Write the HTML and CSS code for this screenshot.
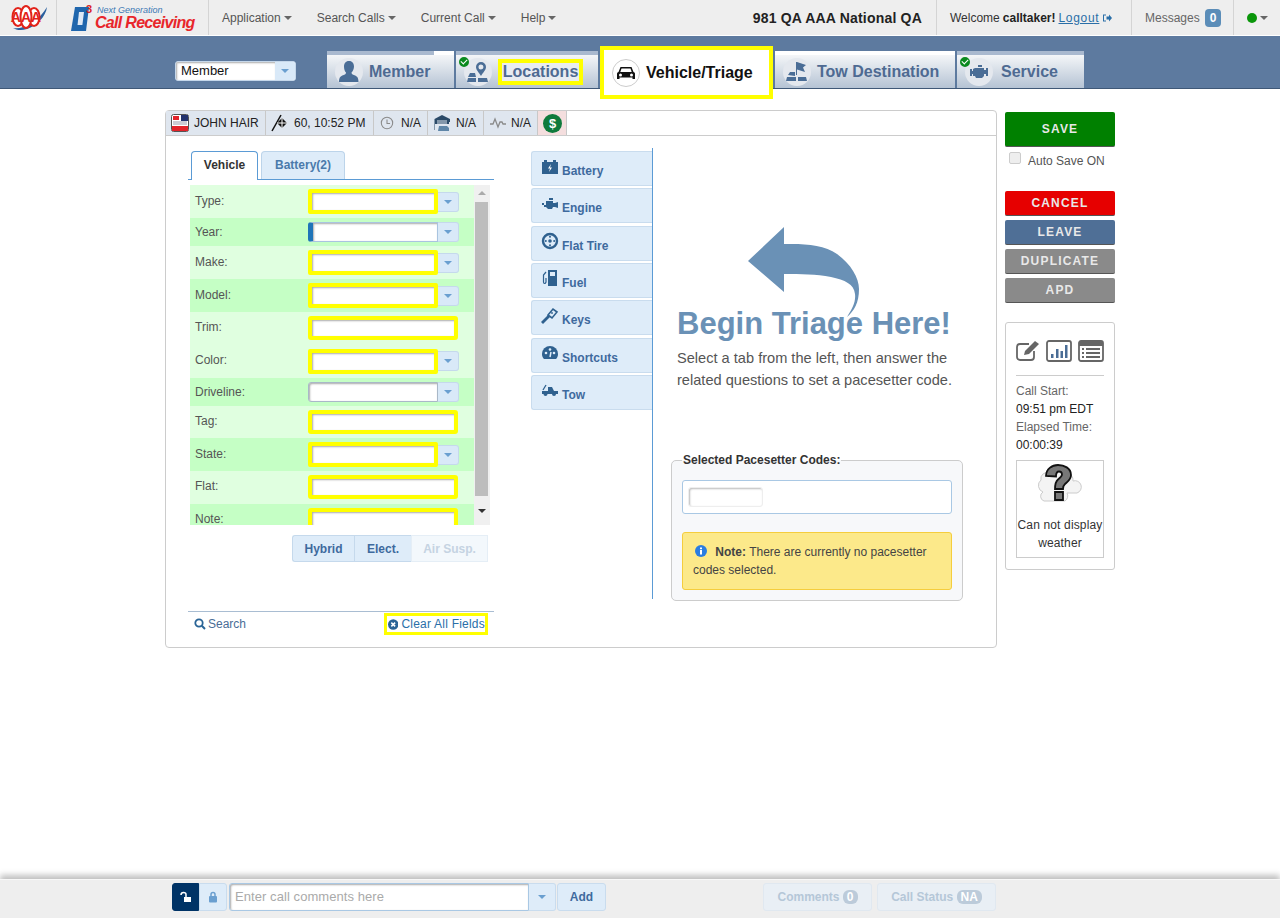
FILE: index.html
```html
<!DOCTYPE html>
<html lang="en">
<head>
    <meta charset="UTF-8">
    <title>Call Receiving</title>
    <link rel="stylesheet" href="styles.css">
</head>
<body>
    <!-- top menu -->
    <header class="topbar">
        <div class="cell logo-aaa">
            <svg width="42" height="30" viewBox="0 0 42 30">
                <path d="M6 25C16 27 32 18 40 4c-1 9-10 19-20 22-6 2-11 1-14-1z" fill="#2a5f9e"/>
                <ellipse cx="11" cy="14" rx="5.500" ry="9" fill="#fff" stroke="#e2231a" stroke-width="2"/>
                <ellipse cx="27" cy="14" rx="5.500" ry="9" fill="#fff" stroke="#e2231a" stroke-width="2"/>
                <ellipse cx="19" cy="14" rx="5.500" ry="11" fill="#fff" stroke="#e2231a" stroke-width="2"/>
                <text x="19" y="19" class="aaa-text" text-anchor="middle">AAA</text>
            </svg>
        </div>
        <div class="cell logo-call">
            <svg width="24" height="28" viewBox="0 0 24 28">
                <path d="M5 3h14l-3 24H1z" fill="#1f66ad"/>
                <path d="M9 8h5l-1.600 13H7.500z" fill="#dfe9f5"/>
                <text x="16" y="9" class="d3-text">3</text>
            </svg>
            <div class="logo-words">
                <span class="logo-next">Next Generation</span>
                <span class="logo-name">Call Receiving</span>
            </div>
        </div>
        <nav class="menu">
            <a href="#">Application<i class="caret"></i></a>
            <a href="#">Search Calls<i class="caret"></i></a>
            <a href="#">Current Call<i class="caret"></i></a>
            <a href="#">Help<i class="caret"></i></a>
        </nav>
        <div class="club">981 QA AAA National QA</div>
        <div class="cell welcome">
            <span>Welcome</span>
            <b>calltaker!</b>
            <a href="#">Logout</a>
            <svg width="10" height="10" viewBox="0 0 10 10"><path d="M1 1.500h3v1H2v5h2v1H1zM4.500 3.500H7V1.500L10 5 7 8.500v-2H4.500z" fill="#2a6fa8"/></svg>
        </div>
        <div class="cell messages">Messages <span class="badge">0</span></div>
        <div class="cell status-dot"><i class="dot"></i><i class="caret"></i></div>
    </header>

    <!-- blue tab band -->
    <div class="band">
        <div class="member-select">
            <span class="member-value">Member</span>
            <span class="drop"><i class="caret-blue"></i></span>
        </div>
        <div class="main-tabs">
            <a class="tab tab-member" href="#">
                <i class="tab-bar-end"></i>
                <span class="tab-icon">
                    <svg width="24" height="24" viewBox="0 0 24 24"><path d="M12 1c3.500 0 5 2.500 5 5.500 0 2.500-1.200 4.800-2.500 6 0 1.500 1 2 3 2.800 2 .8 4 1.700 4 6.700H2c0-5 2-5.900 4-6.700 2-.8 3-1.300 3-2.800C7.700 11.300 7 9 7 6.500 7 3.500 8.500 1 12 1z" fill="#4a6d96"/></svg>
                </span>
                Member
            </a>
            <a class="tab tab-locations" href="#">
                <i class="check"></i>
                <span class="tab-icon">
                    <svg width="24" height="24" viewBox="0 0 24 24"><path d="M15 2a5 5 0 0 1 5 5c0 3-3 5.500-5 9-2-3.500-5-6-5-9a5 5 0 0 1 5-5zm0 2.500a2.500 2.500 0 1 0 0 5 2.500 2.500 0 0 0 0-5z" fill="#4a6d96"/><path d="M2 17l2-4h5l1 4zM1 22l1-4h8v4zM12 22v-4h9l1 4z" fill="#4a6d96"/></svg>
                </span>
                <span class="mark-yellow">Locations</span>
            </a>
            <a class="tab tab-active" href="#">
                <span class="tab-icon">
                    <svg width="22" height="22" viewBox="0 0 22 22"><path d="M5.500 5h11l2 5c1 .4 1.500 1 1.500 2v5h-2.500v-1.500h-13V17H2v-5c0-1 .5-1.600 1.500-2zm1 1.500L5.300 10h11.400l-1.200-3.500zM5.500 11.500a1.500 1.500 0 1 0 0 3 1.500 1.500 0 0 0 0-3zm11 0a1.500 1.500 0 1 0 0 3 1.500 1.500 0 0 0 0-3z" fill="#111"/></svg>
                </span>
                Vehicle/Triage
            </a>
            <a class="tab tab-tow" href="#">
                <span class="tab-icon">
                    <svg width="24" height="24" viewBox="0 0 24 24"><path d="M11 2h1l9 3-3 2.500L20 12l-8-2.500V15h-1zM3 15l2-3h5v4zM1 21l1-4h9v4zM13 21v-4h8l1 4z" fill="#4a6d96"/></svg>
                </span>
                Tow Destination
            </a>
            <a class="tab tab-service" href="#">
                <i class="check"></i>
                <span class="tab-icon">
                    <svg width="24" height="24" viewBox="0 0 24 24"><path d="M8 8h9v2h2V8h2v8h-2v-2h-2v2l-2 2H9l-1-2H6v-2H5v2H3V9h2v2h1V9zM11 5h4v2h-4z" fill="#4a6d96"/></svg>
                </span>
                Service
            </a>
        </div>
    </div>

    <main class="content">
        <section class="panel">
            <div class="status-bar">
                <div class="stat stat-name">
                    <svg width="18" height="18" viewBox="0 0 18 18"><rect x=".5" y=".5" width="17" height="17" rx="2" fill="#fff" stroke="#555"/><rect x="1" y="12" width="16" height="5" fill="#e2232a"/><rect x="10" y="1" width="7" height="6" fill="#23336e"/><rect x="2" y="2" width="6" height="4" fill="#e2232a"/><path d="M2 8h14M2 10h14" stroke="#99a"/></svg>
                    JOHN HAIR
                </div>
                <div class="stat stat-eta">
                    <svg width="18" height="18" viewBox="0 0 18 18"><path d="M1 17L10 1" stroke="#111" stroke-width="1.500"/><path d="M11 4l5 5-5 5-5-5z" fill="#111"/><path d="M11 4v10M6 9h10" stroke="#fff"/></svg>
                    60, 10:52 PM
                </div>
                <div class="stat stat-clock">
                    <svg width="14" height="14" viewBox="0 0 16 16"><circle cx="8" cy="8" r="6.500" fill="none" stroke="#8a8a8a" stroke-width="1.200"/><path d="M8 4v4.500h3.500" fill="none" stroke="#8a8a8a" stroke-width="1.200"/></svg>
                    N/A
                </div>
                <div class="stat stat-garage">
                    <svg width="18" height="18" viewBox="0 0 18 18"><path d="M9 1l8 4v3h-1v2H2v6h-.5V5z" fill="#2b4a68"/><path d="M4 7h10M4 9h10" stroke="#dfe6ef"/><path d="M6 12h8l2 2v3H5z" fill="#5f86a8"/></svg>
                    N/A
                </div>
                <div class="stat stat-wave">
                    <svg width="16" height="14" viewBox="0 0 16 14"><path d="M0 8h3l2-5 3 8 2-5h2l1 2h3" fill="none" stroke="#8a8a8a" stroke-width="1.300"/></svg>
                    N/A
                </div>
                <div class="stat stat-money"><span class="dollar">$</span></div>
            </div>

            <div class="panel-body">
                <!-- vehicle form -->
                <div class="form-col">
                    <div class="sub-tabs">
                        <a class="sub-tab sub-active" href="#">Vehicle</a>
                        <a class="sub-tab" href="#">Battery(2)</a>
                    </div>
                    <div class="form-box">
                        <div class="rows">
                            <div class="row row-tall"><label>Type:</label><span class="field field-req"></span><span class="drop-btn"><i class="caret-blue"></i></span></div>
                            <div class="row row-alt row-short"><label>Year:</label><span class="field field-focus"></span><span class="drop-btn"><i class="caret-blue"></i></span></div>
                            <div class="row row-tall"><label>Make:</label><span class="field field-req"></span><span class="drop-btn"><i class="caret-blue"></i></span></div>
                            <div class="row row-alt row-tall"><label>Model:</label><span class="field field-req"></span><span class="drop-btn"><i class="caret-blue"></i></span></div>
                            <div class="row row-mid"><label>Trim:</label><span class="field field-req field-wide"></span></div>
                            <div class="row row-tall"><label>Color:</label><span class="field field-req"></span><span class="drop-btn"><i class="caret-blue"></i></span></div>
                            <div class="row row-alt row-short"><label>Driveline:</label><span class="field field-plain"></span><span class="drop-btn"><i class="caret-blue"></i></span></div>
                            <div class="row row-mid"><label>Tag:</label><span class="field field-req field-wide"></span></div>
                            <div class="row row-alt row-tall"><label>State:</label><span class="field field-req"></span><span class="drop-btn"><i class="caret-blue"></i></span></div>
                            <div class="row row-mid"><label>Flat:</label><span class="field field-req field-wide"></span></div>
                            <div class="row row-alt row-mid"><label>Note:</label><span class="field field-req field-wide"></span></div>
                        </div>
                        <div class="scrollbar">
                            <i class="arrow-up"></i>
                            <div class="thumb"></div>
                            <i class="arrow-down"></i>
                        </div>
                    </div>
                    <div class="options">
                        <a class="opt opt-hybrid" href="#">Hybrid</a>
                        <a class="opt opt-elect" href="#">Elect.</a>
                        <a class="opt opt-off" href="#">Air Susp.</a>
                    </div>
                    <div class="form-foot">
                        <a class="foot-link" href="#">
                            <svg width="12" height="12" viewBox="0 0 12 12"><circle cx="5" cy="5" r="3.700" fill="none" stroke="#2a6496" stroke-width="1.800"/><path d="M7.800 7.800L11 11" stroke="#2a6496" stroke-width="2"/></svg>
                            Search
                        </a>
                        <a class="foot-link clear-link" href="#">
                            <svg width="11" height="11" viewBox="0 0 11 11"><circle cx="5.500" cy="5.500" r="5.500" fill="#2a6496"/><path d="M3.500 3.500l4 4M7.500 3.500l-4 4" stroke="#fff" stroke-width="1.600"/></svg>
                            Clear All Fields
                        </a>
                    </div>
                </div>

                <!-- triage categories -->
                <div class="side-tabs">
                    <a class="side-tab" href="#">
                        <svg width="18" height="16" viewBox="0 0 18 16"><path d="M1 3h16v12H1zM3 1h3v2H3zM12 1h3v2h-3z" fill="#2f618f"/><path d="M10 5L7 9.500h2L8 13l3-4.500H9z" fill="#fff"/></svg>
                        Battery
                    </a>
                    <a class="side-tab" href="#">
                        <svg width="18" height="16" viewBox="0 0 18 16"><path d="M5 5h7v2h2l3-1v6l-3-1h-2l-1 2H7l-2-2H3V9H1V7h2v2h2zM8 2h4v2H8z" fill="#2f618f"/></svg>
                        Engine
                    </a>
                    <a class="side-tab" href="#">
                        <svg width="18" height="18" viewBox="0 0 18 18"><circle cx="9" cy="9" r="7" fill="none" stroke="#2f618f" stroke-width="2.400"/><circle cx="9" cy="9" r="1.800" fill="#2f618f"/><circle cx="9" cy="4.800" r="1" fill="#2f618f"/><circle cx="9" cy="13.200" r="1" fill="#2f618f"/><circle cx="4.800" cy="9" r="1" fill="#2f618f"/><circle cx="13.200" cy="9" r="1" fill="#2f618f"/></svg>
                        Flat Tire
                    </a>
                    <a class="side-tab" href="#">
                        <svg width="18" height="18" viewBox="0 0 18 18"><path d="M7 1h9v16H7zM9 3v4h5V3z" fill="#2f618f" fill-rule="evenodd"/><path d="M5 3L2.500 6v7c0 2 2 2 2.500 0V9" fill="none" stroke="#2f618f" stroke-width="1.200"/></svg>
                        Fuel
                    </a>
                    <a class="side-tab" href="#">
                        <svg width="18" height="18" viewBox="0 0 18 18"><path d="M1 16l7-7" stroke="#2f618f" stroke-width="2.800"/><path d="M7 8l5-6 4 3-5 6z" fill="#dfedfa" stroke="#2f618f" stroke-width="1.600"/><circle cx="11" cy="6" r=".9" fill="#2f618f"/></svg>
                        Keys
                    </a>
                    <a class="side-tab" href="#">
                        <svg width="18" height="16" viewBox="0 0 18 16"><path d="M9 1a8 8 0 0 1 8 8c0 2-.7 3.800-2 5H3C1.700 12.800 1 11 1 9a8 8 0 0 1 8-8z" fill="#2f618f"/><circle cx="5" cy="8" r="1.300" fill="#dfedfa"/><circle cx="9" cy="4.500" r="1.300" fill="#dfedfa"/><circle cx="13" cy="8" r="1.300" fill="#dfedfa"/><path d="M9 12l1-5" stroke="#dfedfa" stroke-width="1.500"/></svg>
                        Shortcuts
                    </a>
                    <a class="side-tab" href="#">
                        <svg width="18" height="14" viewBox="0 0 18 14"><path d="M1 8h6V4h4l2 4h4v3H1z" fill="#2f618f"/><path d="M2 7L5 2" stroke="#2f618f" stroke-width="1.300"/><circle cx="4.500" cy="11" r="2" fill="#2f618f"/><circle cx="13" cy="11" r="2" fill="#2f618f"/></svg>
                        Tow
                    </a>
                </div>

                <!-- intro and selected codes -->
                <div class="triage-col">
                    <svg class="big-arrow" width="112" height="91" viewBox="0 0 112 91">
                        <path d="M0 34L36 0v17c20-.5 40 .5 53 10 14 10 22 24 22 35 0 14-5 22-12 28 5-8 9-15 8-23-1-10-10-14-24-17-15-3-30-3-47-3v18z" fill="#6a91b6"/>
                    </svg>
                    <h1 class="begin">Begin Triage Here!</h1>
                    <p class="begin-text">Select a tab from the left, then answer the related questions to set a pacesetter code.</p>
                    <fieldset class="codes">
                        <legend>Selected Pacesetter Codes:</legend>
                        <div class="codes-box"><span class="codes-input"></span></div>
                        <div class="note">
                            <div>
                                <svg width="12" height="12" viewBox="0 0 12 12"><circle cx="6" cy="6" r="6" fill="#2a7de1"/><rect x="5" y="5" width="2" height="4.500" fill="#fff"/><rect x="5" y="2.500" width="2" height="1.700" fill="#fff"/></svg>
                                <b>Note:</b> There are currently no pacesetter
                            </div>
                            <div>codes selected.</div>
                        </div>
                    </fieldset>
                </div>
            </div>
        </section>

        <aside class="actions">
            <a class="btn btn-save" href="#">SAVE</a>
            <label class="auto-save"><span class="box"></span>Auto Save ON</label>
            <a class="btn btn-cancel" href="#">CANCEL</a>
            <a class="btn btn-leave" href="#">LEAVE</a>
            <a class="btn btn-grey" href="#">DUPLICATE</a>
            <a class="btn btn-grey" href="#">APD</a>

            <div class="info-box">
                <div class="info-icons">
                    <svg width="24" height="22" viewBox="0 0 24 22"><path d="M18 11v6a3 3 0 0 1-3 3H4a3 3 0 0 1-3-3V7a3 3 0 0 1 3-3h9" fill="none" stroke="#666" stroke-width="1.800"/><path d="M9 11L19 1l4 3-10 10-5 1z" fill="#666"/></svg>
                    <svg width="26" height="22" viewBox="0 0 26 22"><rect x="1" y="1" width="24" height="20" rx="2" fill="none" stroke="#666" stroke-width="1.800"/><path d="M5 14h2.500v4H5zM10 9h2.500v9H10zM14.500 11H17v7h-2.500zM19 5h2.500v13H19z" fill="#4a6d96"/></svg>
                    <svg width="26" height="22" viewBox="0 0 26 22"><rect x="1" y="1" width="24" height="20" rx="2" fill="#fff" stroke="#666" stroke-width="1.800"/><rect x="1" y="1" width="24" height="5" fill="#666"/><path d="M4 9h2M8 9h14M4 13h2M8 13h14M4 17h2M8 17h14" stroke="#666" stroke-width="1.800"/></svg>
                </div>
                <div class="info-line">Call Start:</div>
                <div class="info-value">09:51 pm EDT</div>
                <div class="info-line">Elapsed Time:</div>
                <div class="info-value">00:00:39</div>
                <div class="weather">
                    <svg width="50" height="44" viewBox="0 0 50 44">
                        <path d="M6 16a6 6 0 0 1 8-7 9 9 0 0 1 17 0 7 7 0 0 1 7 8 6 6 0 0 1 4 12H32a6 6 0 0 1-2 8H9a5 5 0 0 1-1-9 7 7 0 0 1-2-12z" fill="#f4f4f4" stroke="#ccc"/>
                        <path d="M11 12C11 5 17 1 23 1s13 3 13 10c0 5-4 7-6 9-2 1.800-2 3-2 5h-8c0-4 0-7 3-9.500 2-1.700 4-3 4-5s-1.500-3-3-3-3 1.500-3 5zM20 28h8v8h-8z" fill="#777" stroke="#111" stroke-width="1.800"/>
                    </svg>
                    <span>Can not display weather</span>
                </div>
            </div>
        </aside>
    </main>

    <footer class="bottom">
        <div class="locks">
            <span class="lock lock-on">
                <svg width="12" height="12" viewBox="0 0 12 12"><path d="M4 6h7v5H4z" fill="#fff"/><path d="M6 6V3.500C6 2 5 1.500 3.500 1.500S1 2.500 1 4" fill="none" stroke="#fff" stroke-width="1.500"/></svg>
            </span>
            <span class="lock">
                <svg width="10" height="12" viewBox="0 0 10 12"><rect x="1" y="5" width="8" height="6.500" rx="1" fill="#6a9fd0"/><path d="M3 5V3.500a2 2 0 0 1 4 0V5" fill="none" stroke="#6a9fd0" stroke-width="1.500"/></svg>
            </span>
        </div>
        <div class="comment-input">Enter call comments here</div>
        <span class="comment-drop"><i class="caret-blue"></i></span>
        <a class="add-btn" href="#">Add</a>
        <a class="dim-btn dim-comments" href="#">Comments <span class="dim-badge">0</span></a>
        <a class="dim-btn dim-status" href="#">Call Status <span class="dim-badge">NA</span></a>
    </footer>
</body>
</html>
```

FILE: styles.css
```css
* {
    box-sizing: border-box;
}
body {
    margin: 0;
    height: 100vh;
    display: flex;
    flex-direction: column;
    overflow: hidden;
    font-family: "Liberation Sans", Arial, sans-serif;
    font-size: 12px;
    color: #333;
    background: #fff;
}
a {
    text-decoration: none;
    color: inherit;
}
i {
    display: inline-block;
}

/* top bar */
.topbar {
    height: 35px;
    flex: none;
    display: flex;
    align-items: stretch;
    background: #eee;
}
.cell {
    display: flex;
    align-items: center;
    border-right: 1px solid #d4d4d4;
}
.logo-aaa {
    width: 57px;
    padding-left: 7px;
}
.aaa-text {
    font: bold 14px "Liberation Sans", sans-serif;
    fill: #e2231a;
}
.logo-call {
    width: 152px;
    padding-left: 13px;
    gap: 1px;
}
.d3-text {
    font: bold 11px "Liberation Sans", sans-serif;
    fill: #d8232a;
}
.logo-words {
    display: flex;
    flex-direction: column;
    margin-top: 2px;
}
.logo-next {
    font-size: 9px;
    font-style: italic;
    color: #3c78b4;
    line-height: 9px;
    padding-left: 2px;
}
.logo-name {
    font-size: 16px;
    font-weight: bold;
    font-style: italic;
    color: #e8262b;
    line-height: 16px;
    letter-spacing: -.7px;
    white-space: nowrap;
}
.menu {
    display: flex;
    align-items: center;
    padding-left: 13px;
    gap: 25px;
    color: #555;
}
.menu a {
    white-space: nowrap;
}
.caret {
    width: 0;
    height: 0;
    margin-left: 3px;
    vertical-align: middle;
    border: 4px solid transparent;
    border-bottom-width: 0;
    border-top-color: #666;
}
.club {
    flex: 1;
    align-self: center;
    padding-right: 14px;
    text-align: right;
    font-size: 14px;
    font-weight: bold;
    letter-spacing: .2px;
    color: #222;
}
.welcome {
    width: 195px;
    padding-left: 13px;
    gap: 3px;
    border-left: 1px solid #d4d4d4;
    border-right: 0;
    color: #333;
}
.welcome b {
    color: #222;
}
.welcome a {
    color: #2a6fa8;
    text-decoration: underline;
    letter-spacing: .7px;
}
.messages {
    width: 102px;
    padding-left: 13px;
    color: #666;
    border-right: 0;
    border-left: 1px solid #d4d4d4;
}
.badge {
    margin-left: 5px;
    padding: 2px 5px;
    border-radius: 4px;
    font-weight: bold;
    color: #fff;
    background: #5b8db8;
    line-height: 14px;
}
.status-dot {
    width: 47px;
    padding-left: 13px;
    border-right: 0;
    border-left: 1px solid #d4d4d4;
}
.dot {
    width: 10px;
    height: 10px;
    border-radius: 50%;
    background: #0a960a;
}

/* blue band with tabs */
.band {
    height: 53px;
    flex: none;
    display: flex;
    padding-left: 175px;
    margin-top: 1px;
    background: #5d7a9f;
    border-bottom: 1px solid #3f5877;
    box-shadow: 0 -1px 0 #fff;
}
.member-select {
    display: flex;
    width: 121px;
    height: 20px;
    margin-top: 25px;
    border-radius: 3px;
    overflow: hidden;
    background: #fff;
    border: 1px solid #c5d7ea;
}
.member-value {
    flex: 1;
    padding-left: 5px;
    line-height: 18px;
    font-size: 13px;
    color: #111;
    box-shadow: inset 1px 1px 2px #aaa;
}
.drop {
    display: flex;
    align-items: center;
    justify-content: center;
    width: 20px;
    background: #d9e9f8;
}
.caret-blue {
    width: 0;
    height: 0;
    border: 4px solid transparent;
    border-bottom-width: 0;
    border-top-color: #6a9fd0;
    border-left-width: 4.500px;
    border-right-width: 4.500px;
}
.main-tabs {
    display: flex;
    margin-left: 31px;
    align-items: flex-end;
    gap: 2px;
    height: 52px;
}
.tab {
    position: relative;
    display: flex;
    align-items: center;
    height: 37px;
    padding-left: 8px;
    font-size: 16px;
    font-weight: bold;
    color: #4e6a92;
    background: linear-gradient(#f4f6f8, #b5c3d4);
    border-top: 4px solid #a9b9cf;
    white-space: nowrap;
}
.tab-icon {
    display: flex;
    align-items: center;
    justify-content: center;
    width: 28px;
    height: 28px;
    margin-right: 6px;
    border-radius: 50%;
    background: #e4e8ee;
}
.tab-member {
    width: 127px;
}
.tab-bar-end {
    position: absolute;
    top: -4px;
    right: 0;
    width: 20px;
    height: 4px;
    background: #fff;
}
.tab-locations {
    width: 142px;
}
.mark-yellow {
    border: 4px solid #ff0;
    background: #e8ecf1;
    width: 85px;
    text-align: center;
    line-height: 18px;
}
.tab-active {
    width: 173px;
    height: 53px;
    margin-bottom: -11px;
    padding: 0 0 0 8px;
    color: #111;
    background: #fff;
    border: 4px solid #ff0;
}
.tab-active .tab-icon {
    background: #fff;
    border: 1px solid #ccc;
}
.tab-tow {
    width: 180px;
    border-top-color: #fff;
}
.tab-service {
    width: 127px;
}
.tab-service .tab-icon {
    margin-right: 8px;
}
.check {
    position: absolute;
    top: 2px;
    left: 3px;
    z-index: 1;
    width: 10px;
    height: 10px;
    border-radius: 50%;
    background: #0a8a1e;
    border: 2px solid #0a8a1e;
}
.check::after {
    content: "";
    display: block;
    width: 5px;
    height: 3px;
    border-left: 1.500px solid #fff;
    border-bottom: 1.500px solid #fff;
    transform: rotate(-45deg);
}

/* page content */
.content {
    display: flex;
    gap: 8px;
    margin: 21px 0 0 165px;
}
.panel {
    width: 832px;
    height: 538px;
    border: 1px solid #ccc;
    border-radius: 4px;
}
.status-bar {
    display: flex;
    height: 25px;
    border-bottom: 1px solid #ccc;
}
.stat {
    display: flex;
    align-items: center;
    gap: 5px;
    height: 24px;
    padding-left: 5px;
    background: #dfe6ef;
    border-right: 1px solid #c8c8c8;
    color: #222;
    white-space: nowrap;
}
.stat-name { width: 100px; }
.stat-eta { width: 108px; }
.stat-clock { width: 54px; padding-left: 6px; gap: 7px; }
.stat-garage { width: 56px; }
.stat-wave { width: 54px; padding-left: 6px; gap: 5px; }
.stat-money {
    width: 29px;
    padding-left: 5px;
    background: #f4dede;
}
.dollar {
    width: 19px;
    height: 19px;
    border-radius: 50%;
    background: #0f7a3c;
    color: #fff;
    font-size: 13px;
    font-weight: bold;
    text-align: center;
    line-height: 19px;
}
.panel-body {
    display: flex;
    padding: 12px 0 0 22px;
}

/* left form column */
.form-col {
    width: 306px;
    padding-top: 3px;
}
.sub-tabs {
    display: flex;
    gap: 3px;
    height: 29px;
    padding-left: 3px;
    border-bottom: 1px solid #5b9bd5;
}
.sub-tab {
    width: 84px;
    height: 28px;
    line-height: 26px;
    text-align: center;
    font-weight: bold;
    color: #4a7aab;
    background: #deecf9;
    border: 1px solid #bcd4ea;
    border-bottom: 0;
    border-radius: 4px 4px 0 0;
}
.sub-active {
    width: 67px;
    height: 29px;
    color: #333;
    background: #fff;
    border-color: #5b9bd5;
}
.form-box {
    display: flex;
    width: 300px;
    height: 340px;
    margin: 5px 0 0 2px;
    overflow: hidden;
}
.rows {
    width: 284px;
}
.row {
    display: flex;
    align-items: center;
    padding-left: 5px;
    background: #e0ffe0;
}
.row-alt {
    background: #c5ffc5;
}
.row-tall { height: 33px; }
.row-mid { height: 32.500px; }
.row-short { height: 28px; }
.row label {
    width: 113px;
    color: #555;
    margin-top: -2px;
}
.row-short label {
    margin-top: 0;
}
.field {
    display: block;
    width: 130px;
    height: 20px;
    background: #fff;
    border: 1px solid #a9c4e0;
    border-radius: 3px 0 0 3px;
    box-shadow: inset 1px 1px 2px #aaa;
}
.field-req {
    height: 25px;
    border: 4px solid #ff0;
    border-radius: 2px;
}
.field-wide {
    width: 150px;
    height: 24px;
    border-radius: 3px;
}
.field-focus {
    border-left: 5px solid #1f74b8;
}
.field-plain {
    border-color: #a9b8c8;
}
.drop-btn {
    display: flex;
    align-items: center;
    justify-content: center;
    width: 21px;
    height: 20px;
    background: #d9e9f8;
    border: 1px solid #c5d9ec;
    border-left: 0;
    border-radius: 0 3px 3px 0;
}
.scrollbar {
    display: flex;
    flex-direction: column;
    align-items: center;
    width: 16px;
    background: #f0f0f0;
}
.thumb {
    width: 13px;
    height: 294px;
    margin: 7px 2px 13px 0;
    background: #bdbdbd;
}
.arrow-up {
    width: 0;
    height: 0;
    margin-top: 6px;
    border: 4px solid transparent;
    border-top-width: 0;
    border-bottom-color: #aaa;
}
.arrow-down {
    width: 0;
    height: 0;
    border: 4px solid transparent;
    border-bottom-width: 0;
    border-top-color: #333;
}
.options {
    display: flex;
    justify-content: flex-end;
    height: 27px;
    margin: 10px 6px 0 0;
}
.opt {
    line-height: 27px;
    text-align: center;
    font-weight: bold;
    color: #3e6a9e;
    background: #deecf9;
    border: 1px solid #c5d9ec;
    border-right: 0;
}
.opt-hybrid {
    width: 62px;
    border-radius: 3px 0 0 3px;
}
.opt-elect {
    width: 57px;
}
.opt-off {
    width: 77px;
    color: #c5d3e2;
    background: #f3f8fc;
    border-color: #e5eef6;
    border-right: 1px solid #e5eef6;
}
.form-foot {
    display: flex;
    justify-content: space-between;
    align-items: center;
    height: 25px;
    margin-top: 49px;
    padding: 0 6px;
    border-top: 1px solid #a9bdd2;
}
.foot-link {
    display: flex;
    align-items: center;
    gap: 2px;
    color: #4a6d96;
}
.clear-link {
    width: 104px;
    height: 22px;
    gap: 3px;
    letter-spacing: .22px;
    color: #2a6fa8;
    border: 3px solid #ff0;
    background: #fff;
    white-space: nowrap;
}
.clear-link svg {
    margin-left: 1px;
}

/* triage categories */
.side-tabs {
    display: flex;
    flex-direction: column;
    gap: 2.330px;
    width: 122px;
    height: 451px;
    margin-left: 37px;
    padding-top: 3px;
    border-right: 1px solid #5b9bd5;
}
.side-tab {
    display: flex;
    align-items: center;
    gap: 3px;
    height: 35px;
    padding: 5px 0 0 9px;
    font-weight: bold;
    color: #3e6a9e;
    background: #deecf9;
    border: 1px solid #c9dcee;
    border-right: 0;
    border-radius: 3px 0 0 3px;
}
.side-tab svg {
    margin-top: -9px;
}
.triage-col {
    width: 320px;
}
.big-arrow {
    display: block;
    margin: 79px 0 0 95px;
}
.begin {
    margin: -12px 0 0 24px;
    font-size: 31px;
    line-height: 36px;
    color: #6a91b6;
}
.begin-text {
    width: 290px;
    margin: 5px 0 0 24px;
    font-size: 14.600px;
    line-height: 22px;
    color: #555;
}
.codes {
    width: 292px;
    margin: 62px 0 0 18px;
    padding: 0 10px 10px;
    background: #f7f8fa;
    border: 1px solid #ccc;
    border-radius: 5px;
}
.codes legend {
    padding: 0 1px;
    font-weight: bold;
    color: #333;
}
.codes-box {
    height: 34px;
    margin-top: 13px;
    padding: 6px 5px;
    background: #fff;
    border: 1px solid #a9c8e4;
    border-radius: 3px;
}
.codes-input {
    display: block;
    width: 75px;
    height: 20px;
    border: 1px solid #eee;
    border-radius: 3px;
    box-shadow: inset 1px 1px 2px #bbb;
}
.note {
    height: 58px;
    margin-top: 18px;
    padding: 10px;
    line-height: 18px;
    color: #444;
    background: #fce98a;
    border: 1px solid #f5cd3d;
    border-radius: 3px;
}
.note svg {
    vertical-align: -1px;
    margin: 0 5px 0 2px;
}

/* right side actions */
.actions {
    width: 110px;
    display: flex;
    flex-direction: column;
    gap: 4px;
    padding-top: 2px;
}
.btn {
    height: 25px;
    line-height: 25px;
    text-align: center;
    font-weight: bold;
    letter-spacing: 1.200px;
    color: #e8e8e8;
    border-radius: 2px;
    border-bottom: 1px solid #555;
}
.btn-save {
    height: 35px;
    line-height: 35px;
    background: #008000;
}
.btn-cancel { background: #e60000; }
.btn-leave { background: #4f6f96; }
.btn-grey { background: #8a8a8a; }
.auto-save {
    display: flex;
    align-items: center;
    height: 40px;
    margin-top: -4px;
    padding: 0 0 12px 4px;
    color: #555;
}
.box {
    width: 12px;
    height: 12px;
    margin: -6px 7px 0 0;
    background: #eee;
    border: 1px solid #ccc;
    border-radius: 2px;
}
.info-box {
    height: 248px;
    margin-top: 15px;
    padding: 15px 10px 0;
    border: 1px solid #ccc;
    border-radius: 3px;
    line-height: 18px;
}
.info-icons {
    display: flex;
    justify-content: space-between;
    height: 38px;
    padding-top: 2px;
    margin-bottom: 6px;
    border-bottom: 1px solid #ccc;
}
.info-line {
    color: #666;
}
.info-value {
    color: #222;
}
.weather {
    display: flex;
    flex-direction: column;
    align-items: center;
    height: 98px;
    margin-top: 6px;
    padding-top: 3px;
    border: 1px solid #ccc;
    text-align: center;
    letter-spacing: .15px;
    color: #333;
}
.weather span {
    margin-top: 8px;
}

/* bottom comment bar */
.bottom {
    display: flex;
    align-items: center;
    height: 39px;
    flex: none;
    margin-top: auto;
    padding: 0 0 4px 172px;
    background: #eee;
    border-top: 1px solid #f8f8f8;
    box-shadow: 0 -4px 6px rgba(0, 0, 0, .25);
}
.locks {
    display: flex;
    height: 28px;
}
.lock {
    display: flex;
    align-items: center;
    justify-content: center;
    width: 28px;
    background: #deecf9;
    border: 1px solid #c9dcee;
    border-radius: 0 3px 3px 0;
}
.lock-on {
    width: 27px;
    background: #003366;
    border-color: #003366;
    border-radius: 3px 0 0 3px;
}
.comment-input {
    width: 300px;
    height: 28px;
    margin-left: 2px;
    padding-left: 5px;
    line-height: 25px;
    font-size: 13px;
    letter-spacing: .07px;
    color: #aaa;
    background: #fff;
    border: 1px solid #a9c8e4;
    border-radius: 3px 0 0 3px;
    box-shadow: inset 1px 1px 2px #aaa;
}
.comment-drop {
    display: flex;
    align-items: center;
    justify-content: center;
    width: 27px;
    height: 28px;
    background: #deecf9;
    border: 1px solid #c9dcee;
    border-left: 0;
    border-radius: 0 3px 3px 0;
}
.add-btn {
    width: 49px;
    height: 28px;
    margin-left: 1px;
    line-height: 26px;
    text-align: center;
    font-weight: bold;
    color: #3e6a9e;
    background: #deecf9;
    border: 1px solid #c9dcee;
    border-radius: 3px;
}
.dim-btn {
    height: 28px;
    line-height: 26px;
    text-align: center;
    font-weight: bold;
    color: #b5c7d8;
    background: #e9eff5;
    border: 1px solid #e0e8f0;
    border-radius: 3px;
}
.dim-comments {
    width: 109px;
    margin-left: 157px;
}
.dim-status {
    width: 119px;
    margin-left: 5px;
}
.dim-badge {
    padding: 0 4px;
    border-radius: 6px;
    color: #fff;
    background: #bccbda;
}
```
